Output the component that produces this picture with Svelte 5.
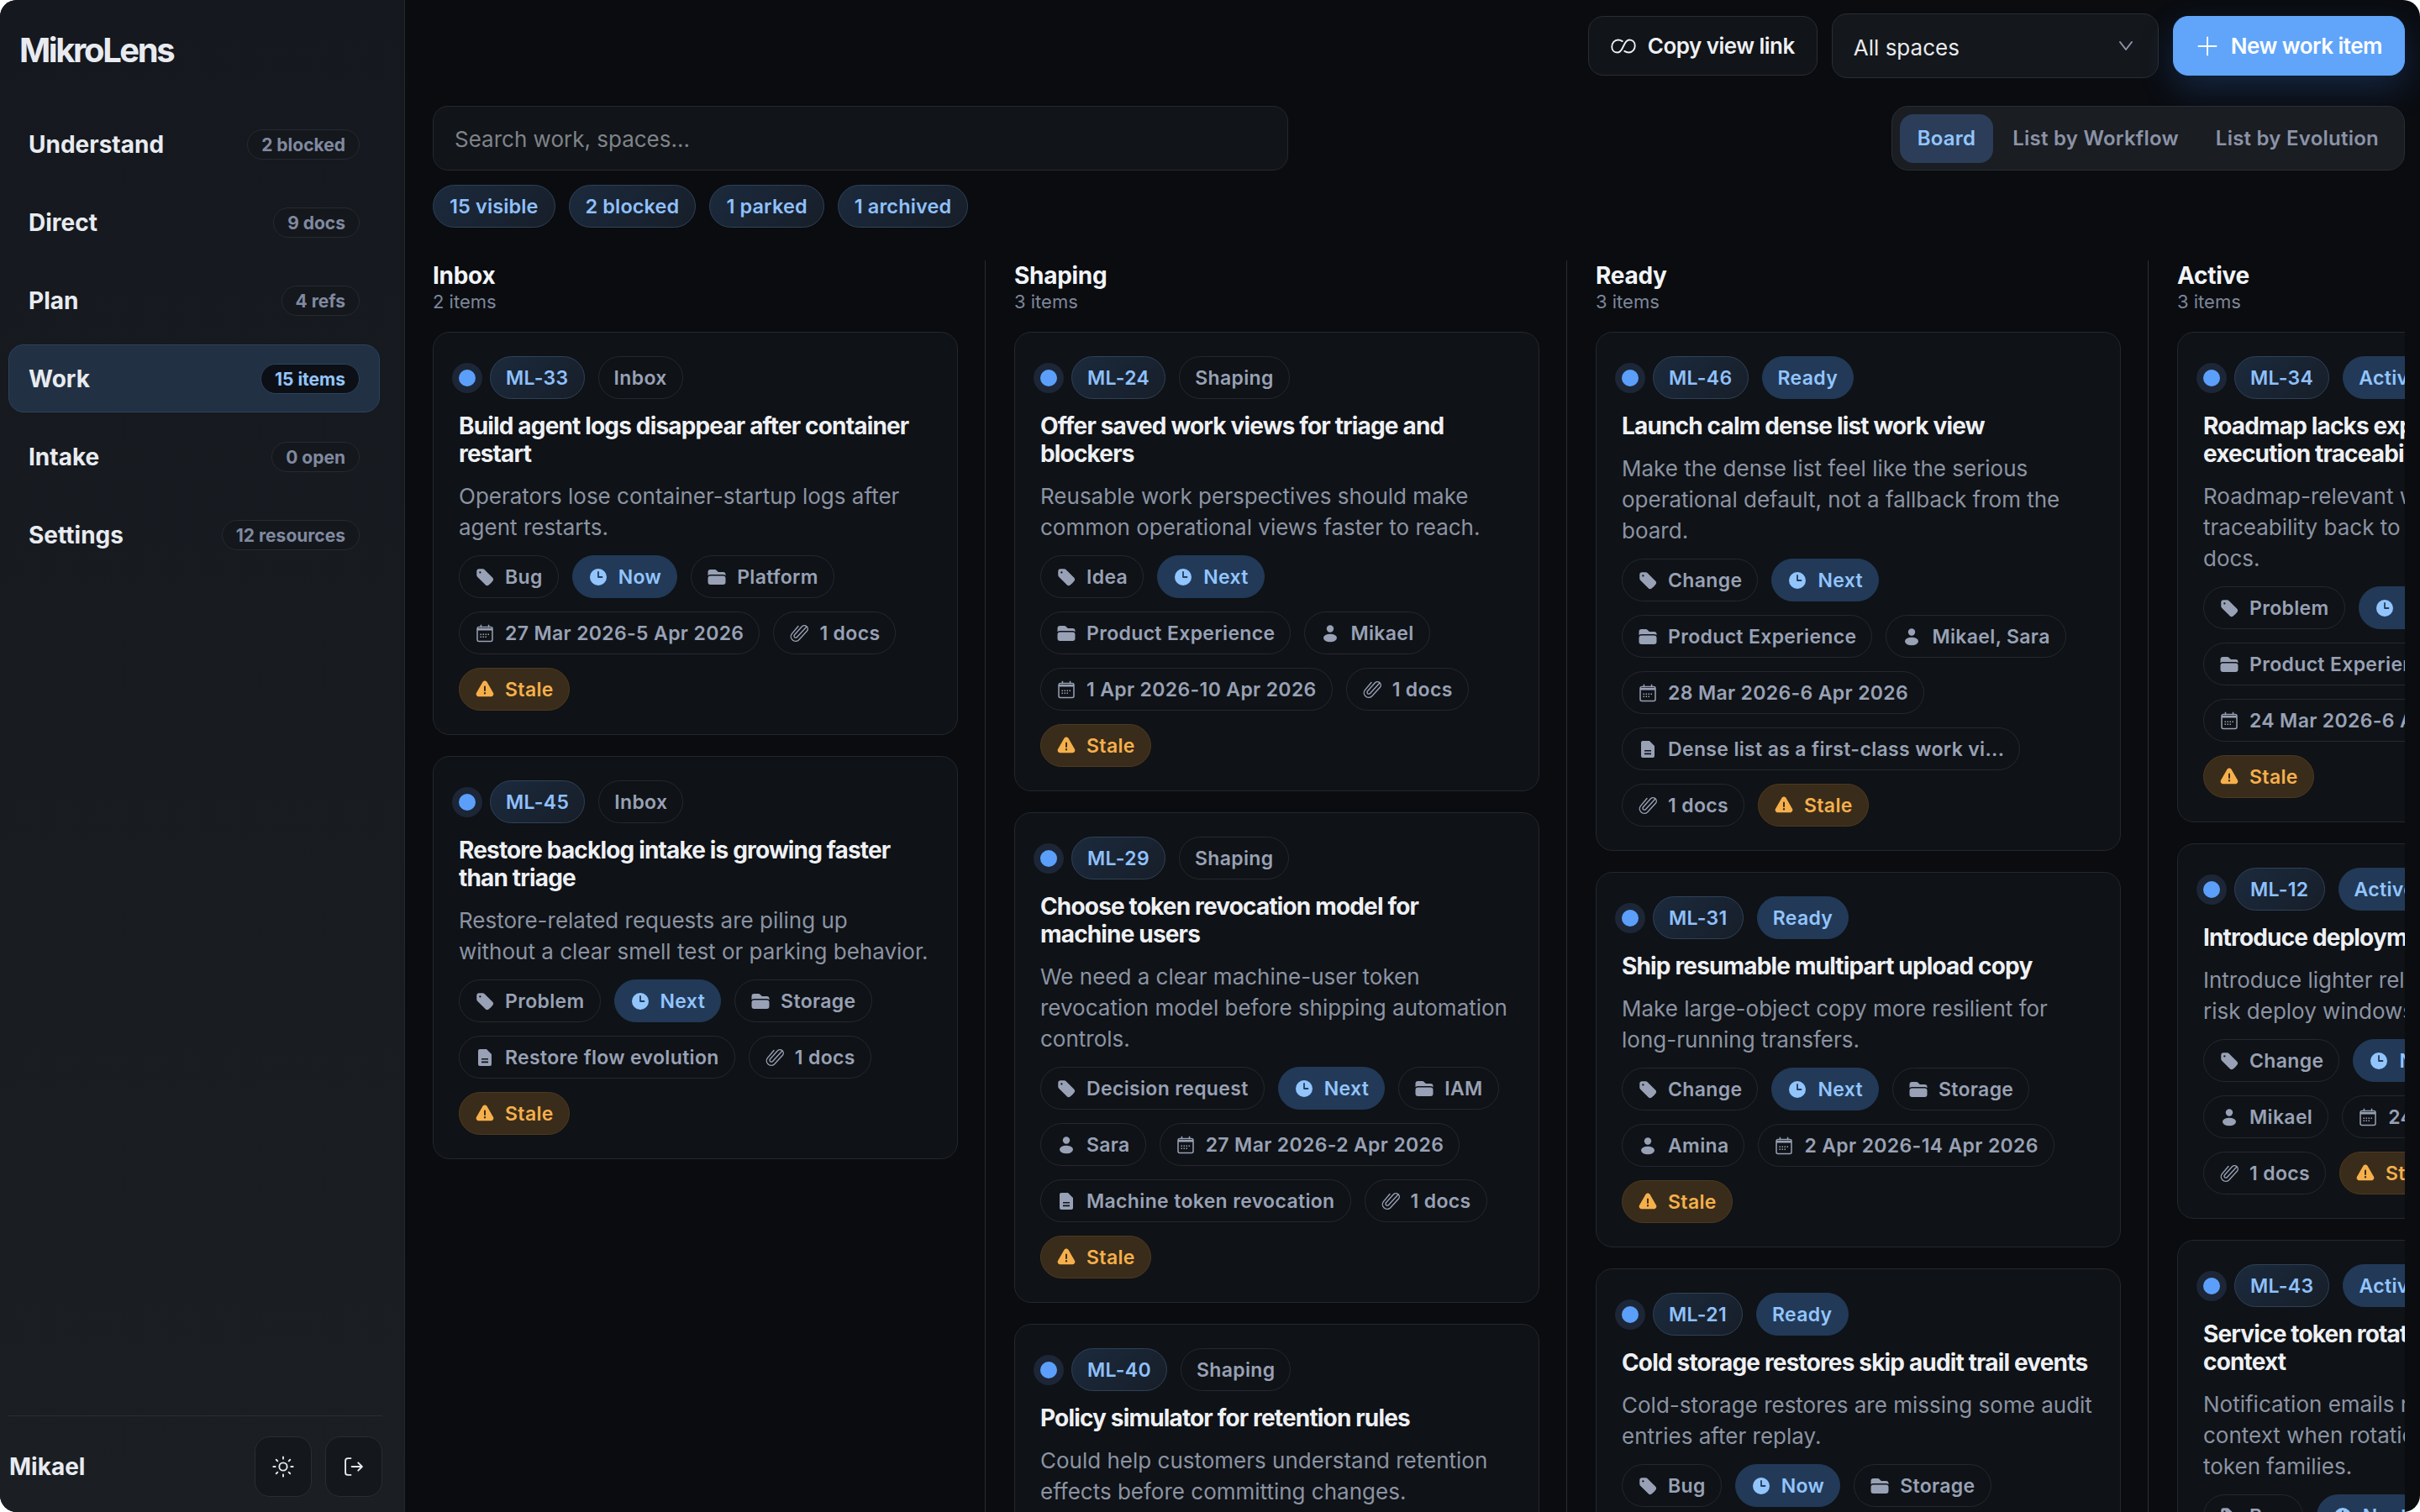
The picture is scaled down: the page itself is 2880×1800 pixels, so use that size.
<script>
    const nav = [
        { name: "Understand", badge: "2 blocked" },
        { name: "Direct", badge: "9 docs" },
        { name: "Plan", badge: "4 refs" },
        { name: "Work", badge: "15 items", active: true },
        { name: "Intake", badge: "0 open" },
        { name: "Settings", badge: "12 resources" },
    ];
    const chips = ["15 visible", "2 blocked", "1 parked", "1 archived"];
    const tabs = ["Board", "List by Workflow", "List by Evolution"];

    const docs = ["clip", "1 docs"];
    const stale = ["warn", "Stale", "warn"];
    const next = ["clock", "Next", "hot"];
    const now = ["clock", "Now", "hot"];

    const columns = [
        {
            name: "Inbox",
            count: "2 items",
            cards: [
                {
                    id: "ML-33",
                    title: "Build agent logs disappear after container restart",
                    desc: "Operators lose container-startup logs after agent restarts.",
                    tags: [["tag", "Bug"], now, ["folder", "Platform"], ["cal", "27 Mar 2026-5 Apr 2026"], docs, stale],
                },
                {
                    id: "ML-45",
                    title: "Restore backlog intake is growing faster than triage",
                    desc: "Restore-related requests are piling up without a clear smell test or parking behavior.",
                    tags: [["tag", "Problem"], next, ["folder", "Storage"], ["doc", "Restore flow evolution"], docs, stale],
                },
            ],
        },
        {
            name: "Shaping",
            count: "3 items",
            cards: [
                {
                    id: "ML-24",
                    title: "Offer saved work views for triage and blockers",
                    desc: "Reusable work perspectives should make common operational views faster to reach.",
                    tags: [["tag", "Idea"], next, ["folder", "Product Experience"], ["user", "Mikael"], ["cal", "1 Apr 2026-10 Apr 2026"], docs, stale],
                },
                {
                    id: "ML-29",
                    title: "Choose token revocation model for machine users",
                    desc: "We need a clear machine-user token revocation model before shipping automation controls.",
                    tags: [["tag", "Decision request"], next, ["folder", "IAM"], ["user", "Sara"], ["cal", "27 Mar 2026-2 Apr 2026"], ["doc", "Machine token revocation"], docs, stale],
                },
                {
                    id: "ML-40",
                    title: "Policy simulator for retention rules",
                    desc: "Could help customers understand retention effects before committing changes.",
                    tags: [["tag", "Idea"], next, ["folder", "Storage"]],
                },
            ],
        },
        {
            name: "Ready",
            count: "3 items",
            cards: [
                {
                    id: "ML-46",
                    title: "Launch calm dense list work view",
                    desc: "Make the dense list feel like the serious operational default, not a fallback from the board.",
                    tags: [["tag", "Change"], next, ["folder", "Product Experience"], ["user", "Mikael, Sara"], ["cal", "28 Mar 2026-6 Apr 2026"], ["doc", "Dense list as a first-class work vi..."], docs, stale],
                },
                {
                    id: "ML-31",
                    title: "Ship resumable multipart upload copy",
                    desc: "Make large-object copy more resilient for long-running transfers.",
                    tags: [["tag", "Change"], next, ["folder", "Storage"], ["user", "Amina"], ["cal", "2 Apr 2026-14 Apr 2026"], stale],
                },
                {
                    id: "ML-21",
                    title: "Cold storage restores skip audit trail events",
                    desc: "Cold-storage restores are missing some audit entries after replay.",
                    tags: [["tag", "Bug"], now, ["folder", "Storage"]],
                },
            ],
        },
        {
            name: "Active",
            count: "3 items",
            cards: [
                {
                    id: "ML-34",
                    title: "Roadmap lacks explicit connection to execution traceability",
                    desc: "Roadmap-relevant work should show traceability back to the planning direction docs.",
                    tags: [["tag", "Problem"], next, ["folder", "Product Experience"], ["user", "Mikael"], ["cal", "24 Mar 2026-6 Apr 2026"], docs, stale],
                },
                {
                    id: "ML-12",
                    title: "Introduce deployment windows",
                    desc: "Introduce lighter release approvals for low-risk deploy windows without blocking.",
                    tags: [["tag", "Change"], next, ["folder", "Platform"], ["user", "Mikael"], ["cal", "24 Mar 2026-8 Apr 2026"], docs, stale],
                },
                {
                    id: "ML-43",
                    title: "Service token rotation emails lack clear context",
                    desc: "Notification emails remain alarming without context when rotation touches many different token families.",
                    tags: [["tag", "Bug"], next, ["folder", "IAM"]],
                },
            ],
        },
    ];
</script>

{#snippet icon(name)}
    <svg class="ico" viewBox="0 0 24 24" aria-hidden="true">
        {#if name === "tag"}
            <path fill="currentColor" fill-rule="evenodd" d="M5.25 2.25a3 3 0 0 0-3 3v4.318a3 3 0 0 0 .879 2.121l9.58 9.581c.92.92 2.39 1.186 3.548.428a18.849 18.849 0 0 0 5.441-5.44c.758-1.16.492-2.629-.428-3.548l-9.58-9.581a3 3 0 0 0-2.122-.879H5.25ZM6.375 7.5a1.125 1.125 0 1 0 0-2.25 1.125 1.125 0 0 0 0 2.25Z" />
        {:else if name === "clock"}
            <path fill="currentColor" fill-rule="evenodd" d="M12 2a10 10 0 1 0 0 20 10 10 0 0 0 0-20ZM12.9 6a.9.9 0 0 0-1.8 0v6c0 .5.4.9.9.9h4.5a.9.9 0 0 0 0-1.8h-3.6V6Z" />
        {:else if name === "folder"}
            <path fill="currentColor" d="M19.5 21a3 3 0 0 0 3-3v-4.5a3 3 0 0 0-3-3h-15a3 3 0 0 0-3 3V18a3 3 0 0 0 3 3h15ZM1.5 10.146V6a3 3 0 0 1 3-3h5.379a2.25 2.25 0 0 1 1.59.659l2.122 2.121c.14.141.331.22.53.22H19.5a3 3 0 0 1 3 3v1.146A4.483 4.483 0 0 0 19.5 9h-15a4.483 4.483 0 0 0-3 1.146Z" />
        {:else if name === "cal"}
            <path fill="none" stroke="currentColor" stroke-width="1.5" d="M3 6.5a2 2 0 0 1 2-2h14a2 2 0 0 1 2 2v13a2 2 0 0 1-2 2H5a2 2 0 0 1-2-2Z" />
            <path fill="currentColor" d="M3 6h18v2.5H3ZM6.7 1.8h1.5v3.5H6.7ZM15.8 1.8h1.5v3.5h-1.5ZM6.5 12.5h1.5V14H6.5ZM9.5 12.5H11V14H9.5ZM12.5 12.5H14V14h-1.5ZM15.5 12.5H17V14h-1.5ZM6.5 15.5h1.5V17H6.5ZM9.5 15.5H11V17H9.5ZM12.5 15.5H14V17h-1.5Z" />
        {:else if name === "clip"}
            <path fill="none" stroke="currentColor" stroke-width="1.4" stroke-linecap="round" stroke-linejoin="round" d="m20.5 4.5-11 12a2 2 0 0 1-3-2.7l9-10a4 4 0 0 1 5.8 5.5l-9.8 10.6a5.500 5.500 0 0 1-8-7.500L11 3.500" />
        {:else if name === "warn"}
            <path fill="currentColor" fill-rule="evenodd" d="M9.401 3.003c1.155-2 4.043-2 5.197 0l7.355 12.748c1.154 2-.29 4.5-2.599 4.5H4.645c-2.309 0-3.752-2.5-2.598-4.5L9.4 3.003ZM12 7.5a1 1 0 0 1 1 1v4.5a1 1 0 0 1-2 0V8.5a1 1 0 0 1 1-1Zm0 10a1.2 1.2 0 1 0 0-2.4 1.2 1.2 0 0 0 0 2.4Z" />
        {:else if name === "user"}
            <circle fill="currentColor" cx="12" cy="6.5" r="4.2" />
            <ellipse fill="currentColor" cx="12" cy="17.5" rx="8" ry="4.8" />
        {:else if name === "doc"}
            <path fill="currentColor" fill-rule="evenodd" d="M6 2h8l6 6v12a2 2 0 0 1-2 2H6a2 2 0 0 1-2-2V4a2 2 0 0 1 2-2ZM8 13v1.6h8V13ZM8 16.6v1.6h8v-1.6Z" />
        {/if}
    </svg>
{/snippet}

<div class="app">
    <aside class="sidebar">
        <div class="logo">MikroLens</div>
        <nav class="nav">
            {#each nav as item}
                <div class="nav-item" class:active={item.active}>
                    <span>{item.name}</span>
                    <span class="nav-badge">{item.badge}</span>
                </div>
            {/each}
        </nav>
        <div class="foot">
            <span class="user">Mikael</span>
            <div class="foot-btns">
                <button class="square" aria-label="Theme">
                    <svg viewBox="0 0 24 24" fill="none" stroke="currentColor" stroke-width="1.6" stroke-linecap="round">
                        <circle cx="12" cy="12" r="4" />
                        <path d="M12 2v2M12 20v2M4.9 4.9l1.4 1.4M17.7 17.7l1.4 1.4M2 12h2M20 12h2M6.3 17.7l-1.4 1.4M19.1 4.9l-1.4 1.4" />
                    </svg>
                </button>
                <button class="square" aria-label="Sign out">
                    <svg viewBox="0 0 24 24" fill="none" stroke="currentColor" stroke-width="1.6" stroke-linecap="round" stroke-linejoin="round">
                        <path d="M9 3.5H6A2.5 2.5 0 0 0 3.5 6v12A2.5 2.5 0 0 0 6 20.5h3M16.5 8l4 4-4 4M20.5 12H10" />
                    </svg>
                </button>
            </div>
        </div>
    </aside>

    <main class="main">
        <div class="topbar">
            <button class="btn">
                <svg class="link-ico" viewBox="0 0 24 24" fill="none" stroke="currentColor" stroke-width="1.5" stroke-linecap="round">
                    <path d="M11 7.3C9.5 6.3 8.5 6 7 6 3.5 6 1 9 1 12.5 1 16 3.5 18 6.5 18c2 0 3.5-1.5 5.5-6 2-4.500 3.500-6 5.500-6 3 0 5.500 2 5.500 5.500C23 15 20.500 18 17 18c-1.500 0-2.500-.3-4-1.300" />
                </svg>
                Copy view link
            </button>
            <div class="select">
                <span>All spaces</span>
                <svg viewBox="0 0 24 24" fill="none" stroke="currentColor" stroke-width="2" stroke-linecap="round" stroke-linejoin="round"><path d="m5 7 7 9 7-9" /></svg>
            </div>
            <button class="btn primary">
                <svg class="btn-ico" viewBox="0 0 24 24" fill="none" stroke="currentColor" stroke-width="1.6" stroke-linecap="round"><path d="M12 3v18M3 12h18" /></svg>
                New work item
            </button>
        </div>

        <div class="toolbar">
            <div class="search">Search work, spaces...</div>
            <div class="tabs">
                {#each tabs as tab, i}
                    <span class="tab" class:on={i === 0}>{tab}</span>
                {/each}
            </div>
        </div>

        <div class="chips">
            {#each chips as chip}
                <span class="pill blue chip">{chip}</span>
            {/each}
        </div>

        <div class="board">
            {#each columns as col}
                <section class="col">
                    <h2>{col.name}</h2>
                    <p class="count">{col.count}</p>
                    {#each col.cards as card}
                        <article class="card">
                            <div class="card-head">
                                <span class="dot"></span>
                                <span class="pill blue">{card.id}</span>
                                <span class="pill" class:hot={col.name === "Ready" || col.name === "Active"}>{col.name}</span>
                            </div>
                            <h3>{card.title}</h3>
                            <p class="desc">{card.desc}</p>
                            <div class="tags">
                                {#each card.tags as tag}
                                    <span class="pill {tag[2] ?? ''}">
                                        {@render icon(tag[0])}
                                        {tag[1]}
                                    </span>
                                {/each}
                            </div>
                        </article>
                    {/each}
                </section>
            {/each}
        </div>
    </main>
</div>

<style>
    :global(body) {
        background: #fff;
        font-family: "Inter", sans-serif;
    }

    .app {
        display: flex;
        height: 100vh;
        overflow: hidden;
        border-radius: 20px;
        background: #0a0c10;
        color: #eceef2;
    }

    .sidebar {
        flex: 0 0 482px;
        box-sizing: border-box;
        display: flex;
        flex-direction: column;
        padding: 0 26px 18px 10px;
        background: linear-gradient(180deg, #15181e, #1b1e22);
        border-right: 1px solid #24272c;
    }
    .logo {
        height: 131px;
        box-sizing: border-box;
        padding: 38px 0 0 13px;
        font-size: 40px;
        line-height: 44px;
        font-weight: 700;
        letter-spacing: -0.06em;
        color: #e8ebf0;
    }
    .nav {
        display: flex;
        flex-direction: column;
        gap: 12px;
        margin-right: 3px;
        flex: 1;
    }
    .nav-item {
        display: flex;
        align-items: center;
        justify-content: space-between;
        box-sizing: border-box;
        height: 81px;
        padding: 1px 23px 0;
        border: 1px solid transparent;
        border-radius: 18px;
        font-size: 28px;
        font-weight: 700;
        color: #e8ebf0;
    }
    .nav-item.active {
        background: #213043;
        border-color: #2c435f;
    }
    .nav-badge {
        height: 36px;
        box-sizing: border-box;
        display: flex;
        align-items: center;
        padding: 0 16px;
        border: 1px solid #272a30;
        border-radius: 18px;
        background: #14171c;
        font-size: 21px;
        font-weight: 700;
        color: #808aa0;
    }
    .active .nav-badge {
        background: #0c1016;
        border-color: #2c435f;
        color: #93c5fd;
    }
    .foot {
        display: flex;
        align-items: center;
        justify-content: space-between;
        padding: 24px 0 0 1px;
        border-top: 1px solid #2a2d32;
    }
    .user {
        font-size: 28px;
        font-weight: 700;
        color: #e8ebf0;
    }
    .foot-btns {
        display: flex;
        gap: 16px;
    }
    .square {
        width: 68px;
        height: 72px;
        padding: 0;
        display: flex;
        align-items: center;
        justify-content: center;
        background: #14171b;
        border: 1px solid #2a2d32;
        border-radius: 18px;
        color: #e8ebf0;
    }
    .square svg {
        width: 28px;
        height: 28px;
    }

    .main {
        flex: 1;
        min-width: 0;
        display: flex;
        flex-direction: column;
        padding: 16px 18px 0 33px;
    }
    .topbar {
        display: flex;
        justify-content: flex-end;
        align-items: center;
        gap: 17px;
        margin-bottom: 33px;
    }
    .btn {
        height: 71px;
        box-sizing: border-box;
        display: flex;
        align-items: center;
        gap: 14px;
        padding: 0 26px;
        background: #111418;
        border: 1px solid #2a2d33;
        border-radius: 18px;
        font-family: inherit;
        font-size: 26px;
        font-weight: 600;
        letter-spacing: -0.02em;
        color: #eef0f4;
    }
    .btn-ico {
        width: 28px;
        height: 28px;
    }
    .link-ico {
        width: 30px;
        height: 30px;
    }
    .primary {
        background: #60a5fa;
        border-color: #60a5fa;
        color: #fff;
        box-shadow: 0 16px 40px rgba(59, 130, 246, 0.22);
    }
    .select {
        width: 389px;
        height: 77px;
        box-sizing: border-box;
        display: flex;
        align-items: center;
        justify-content: space-between;
        padding: 0 26px 0 25px;
        background: #14171b;
        border: 1px solid #2a2d33;
        border-radius: 18px;
        font-size: 26px;
        color: #e8eaee;
    }
    .select span {
        padding-top: 3px;
    }
    .select svg {
        width: 24px;
        height: 24px;
        color: #8b93a7;
    }

    .toolbar {
        display: flex;
        justify-content: space-between;
        align-items: center;
        margin-bottom: 17px;
    }
    .search {
        width: 1018px;
        height: 77px;
        box-sizing: border-box;
        display: flex;
        align-items: center;
        padding: 1px 25px 0;
        background: #111418;
        border: 1px solid #25282d;
        border-radius: 18px;
        font-size: 26px;
        color: #7f8389;
    }
    .tabs {
        height: 77px;
        box-sizing: border-box;
        display: flex;
        align-items: center;
        gap: 2px;
        padding: 0 9px;
        background: #1a1d22;
        border: 1px solid #2a2d33;
        border-radius: 20px;
    }
    .tab {
        height: 58px;
        display: flex;
        align-items: center;
        padding: 0 21px;
        border-radius: 16px;
        font-size: 24px;
        font-weight: 600;
        letter-spacing: 0.01em;
        color: #8b93a7;
    }
    .tab.on {
        background: #2b3d58;
        color: #93c5fd;
    }

    .chips {
        display: flex;
        gap: 16px;
        margin-bottom: 39px;
    }

    .pill {
        height: 51px;
        box-sizing: border-box;
        display: inline-flex;
        align-items: center;
        flex: none;
        gap: 12px;
        padding: 0 18px;
        border: 1px solid #25282e;
        border-radius: 26px;
        font-size: 23px;
        font-weight: 600;
        letter-spacing: 0.015em;
        white-space: nowrap;
        color: #98a1b5;
    }
    .pill.chip {
        padding: 0 19px;
        font-size: 23.5px;
        letter-spacing: 0.005em;
    }
    .pill.blue {
        background: linear-gradient(135deg, #1b2a3d, #171e29);
        border-color: #2f4258;
        color: #8fc0fb;
    }
    .pill.hot {
        background: #223a58;
        border-color: #223a58;
        color: #93c5fd;
    }
    .pill.warn {
        background: #3a2c1a;
        border-color: #4e3a1e;
        color: #f5b04c;
    }
    .ico {
        width: 24px;
        height: 24px;
        flex: none;
    }

    .board {
        flex: 1;
        min-height: 0;
        display: flex;
        gap: 34px;
        overflow: hidden;
    }
    .col {
        flex: 0 0 658px;
        box-sizing: border-box;
        padding-right: 32px;
        border-right: 1px solid #2a2d32;
    }
    .col h2 {
        margin: 0;
        font-size: 28px;
        line-height: 36px;
        font-weight: 700;
        letter-spacing: -0.01em;
        color: #f2f4f7;
    }
    .count {
        margin: 0 0 23px;
        font-size: 22px;
        line-height: 26px;
        color: #7d8699;
    }

    .card {
        display: flex;
        flex-direction: column;
        gap: 15px;
        padding: 28px 33px 28px 30px;
        margin-bottom: 25px;
        background: #0f1216;
        border: 1px solid #24272c;
        border-radius: 20px;
    }
    .card-head {
        display: flex;
        align-items: center;
        gap: 16px;
        margin: 0 0 1px -8px;
    }
    .dot {
        flex: none;
        width: 36px;
        height: 36px;
        box-sizing: border-box;
        border: 8px solid #1c2636;
        border-radius: 50%;
        background: #5b9ffa;
        margin-right: -7px;
    }
    .card h3 {
        margin: 0;
        font-size: 28px;
        line-height: 33px;
        font-weight: 700;
        letter-spacing: -0.03em;
        color: #eef0f4;
    }
    .desc {
        margin: 0;
        font-size: 26px;
        line-height: 37px;
        color: #8b93a3;
    }
    .tags {
        display: flex;
        flex-wrap: wrap;
        gap: 16px;
    }
</style>
